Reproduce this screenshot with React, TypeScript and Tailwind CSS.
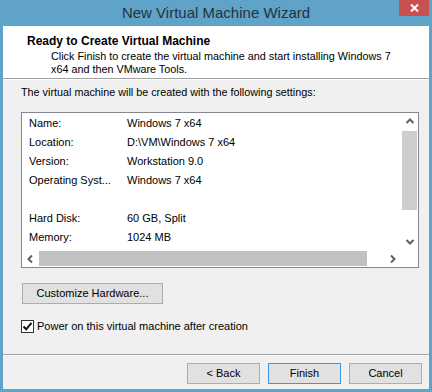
import React from "react";

const FONT = { fontFamily: '"Liberation Sans", Arial, sans-serif' };

function Chevron({ dir }: { dir: "up" | "down" | "left" | "right" }) {
  const paths: Record<string, string> = {
    up: "M1.5 6 L5 2.5 L8.5 6",
    down: "M1.5 3 L5 6.5 L8.5 3",
    left: "M6 1.5 L2.5 5 L6 8.5",
    right: "M3 1.5 L6.5 5 L3 8.5",
  };
  return (
    <svg width="10" height="10" viewBox="0 0 10 10">
      <path d={paths[dir]} fill="none" stroke="#606060" strokeWidth="2" />
    </svg>
  );
}

const rows: [string, string][] = [
  ["Name:", "Windows 7 x64"],
  ["Location:", "D:\\VM\\Windows 7 x64"],
  ["Version:", "Workstation 9.0"],
  ["Operating Syst...", "Windows 7 x64"],
  ["", ""],
  ["Hard Disk:", "60 GB, Split"],
  ["Memory:", "1024 MB"],
];

function Btn({ children, primary = false, w = "w-[73px]" }: { children: React.ReactNode; primary?: boolean; w?: string }) {
  return (
    <div
      className={`${w} h-[21px] flex items-center justify-center bg-[#e1e1e1] border text-[11px] text-black ${
        primary ? "border-[#3c96e6]" : "border-[#adadad]"
      }`}
    >
      {children}
    </div>
  );
}

export default function App() {
  return (
    <div className="w-[432px] h-[392px] bg-[#5fa3c9] flex flex-col" style={FONT}>
      {/* Title bar */}
      <div className="relative h-[26px] flex items-center justify-center shrink-0">
        <span className="text-[15px] text-[#26323c] leading-none -mt-[2px]">New Virtual Machine Wizard</span>
        <div className="absolute right-[3px] top-0 w-[30px] h-[16px] bg-[#c75050] flex items-center justify-center">
          <svg width="9" height="8" viewBox="0 0 9 8">
            <path d="M1 0.5 L8 7.5 M8 0.5 L1 7.5" stroke="#fff" strokeWidth="2" />
          </svg>
        </div>
      </div>

      {/* Client area */}
      <div className="mx-[3px] mb-[3px] flex-1 bg-[#f0f0f0] flex flex-col">
        {/* Header */}
        <div className="h-[53px] bg-white border-b border-[#a0a0a0] pl-[24px] pt-[8px] shrink-0">
          <div className="text-[12px] font-bold text-black leading-[14px]">Ready to Create Virtual Machine</div>
          <div className="pl-[24px] mt-[2px] text-[10.8px] text-black leading-[13px]">
            Click Finish to create the virtual machine and start installing Windows 7
            <br />
            x64 and then VMware Tools.
          </div>
        </div>
        <div className="h-px bg-white shrink-0" />

        {/* Body */}
        <div className="h-[274px] pl-[18px] pt-[5px] flex flex-col shrink-0">
          <div className="text-[10.8px] leading-[14px] text-black">
            The virtual machine will be created with the following settings:
          </div>
          <div className="mt-[13px] w-[398px] h-[156px] border border-[#828790] bg-white flex flex-col">
            <div className="flex h-[137px]">
              <div className="flex-1 pt-[1px] pl-[7px]">
                {rows.map(([k, v], i) => (
                  <div key={i} className="flex h-[19px] items-center text-[11px] text-black">
                    <span className="w-[98px]">{k}</span>
                    <span className="whitespace-nowrap">{v}</span>
                  </div>
                ))}
              </div>
              <div className="w-[17px] flex flex-col bg-white">
                <div className="h-[17px] flex items-center justify-center">
                  <Chevron dir="up" />
                </div>
                <div className="h-[79px] mt-px mx-px bg-[#cdcdcd]" />
                <div className="flex-1" />
                <div className="h-[17px] flex items-center justify-center">
                  <Chevron dir="down" />
                </div>
              </div>
            </div>
            <div className="flex h-[17px]">
              <div className="w-[17px] flex items-center justify-center">
                <Chevron dir="left" />
              </div>
              <div className="w-[328px] my-px bg-[#c1c1c1]" />
              <div className="flex-1" />
              <div className="w-[17px] flex items-center justify-center">
                <Chevron dir="right" />
              </div>
              <div className="w-[17px]" />
            </div>
          </div>

          <div className="mt-[15px] ml-px">
            <Btn w="w-[141px]">Customize Hardware...</Btn>
          </div>

          <div className="mt-[14px] flex items-center">
            <div className="w-[13px] h-[13px] border border-[#333] bg-white flex items-center justify-center">
              <svg width="11" height="11" viewBox="0 0 11 11">
                <path d="M1.5 5.5 L4.2 8.3 L9.5 1.8" fill="none" stroke="#111" strokeWidth="2" />
              </svg>
            </div>
            <span className="ml-[3px] text-[11px] text-black">Power on this virtual machine after creation</span>
          </div>
        </div>

        {/* Footer */}
        <div className="h-px bg-[#a0a0a0] shrink-0" />
        <div className="h-px bg-white shrink-0" />
        <div className="flex-1 flex justify-end gap-[8px] pr-[7px] pt-[7px]">
          <Btn>&lt; Back</Btn>
          <Btn primary>Finish</Btn>
          <Btn>Cancel</Btn>
        </div>
      </div>
    </div>
  );
}
